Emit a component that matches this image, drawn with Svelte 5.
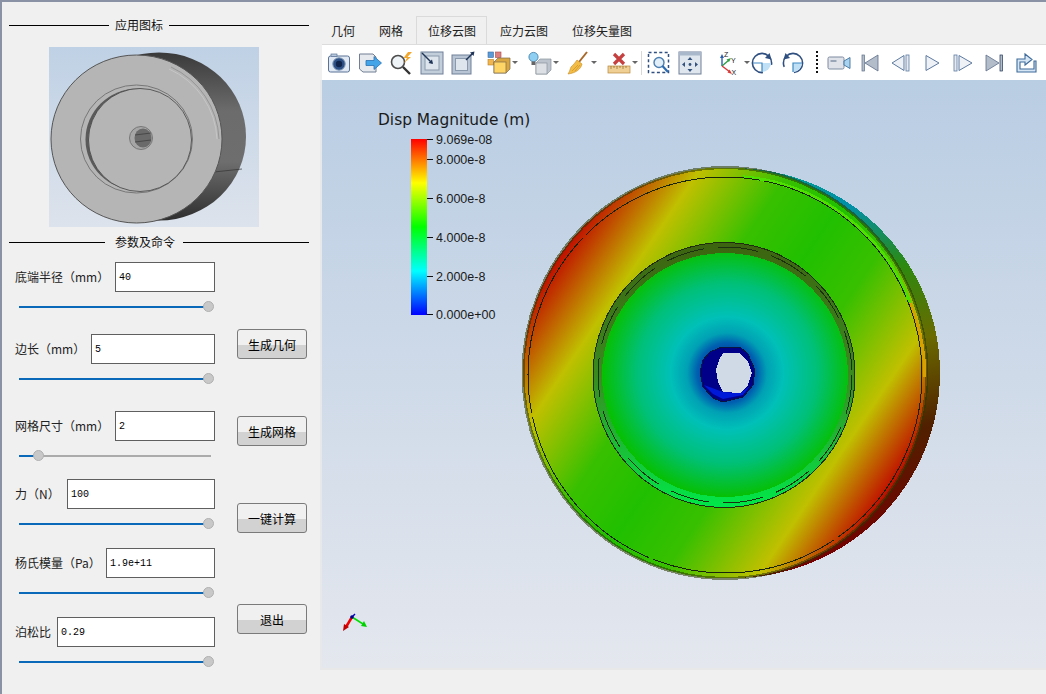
<script>
  const fields = [
    { label: '底端半径（mm）', value: '40', w: 100, pos: 98.4 },
    { label: '边长（mm）', value: '5', w: 76, pos: 98.4 },
    { label: '网格尺寸（mm）', value: '2', w: 100, pos: 10 },
    { label: '力（N）', value: '100', w: 52, pos: 98.4 },
    { label: '杨氏模量（Pa）', value: '1.9e+11', w: 91, pos: 98.4 },
    { label: '泊松比', value: '0.29', w: 42, pos: 98.4 }
  ];
  const tabs = ['几何', '网格', '位移云图', '应力云图', '位移矢量图'];
  const ticks = [
    { y: 139, t: '9.069e-08' },
    { y: 159, t: '8.000e-8' },
    { y: 198, t: '6.000e-8' },
    { y: 237, t: '4.000e-8' },
    { y: 276, t: '2.000e-8' },
    { y: 314, t: '0.000e+00' }
  ];
</script>

<div class="window">
  <aside class="side">
    <div class="title"><i class="ln first"></i><span>应用图标</span><i class="ln"></i></div>
    <svg class="thumb" width="210" height="180" viewBox="0 0 210 180">
      <defs>
        <linearGradient id="tbg" x1="0" y1="0" x2="0" y2="1">
          <stop offset="0" stop-color="#bfd1e5" /><stop offset="1" stop-color="#dde3ec" />
        </linearGradient>
        <linearGradient id="tbody" x1="0" y1="0" x2="0" y2="1">
          <stop offset="0" stop-color="#3a3a3a" /><stop offset=".35" stop-color="#6c6c6c" />
          <stop offset=".65" stop-color="#6e6e6e" /><stop offset="1" stop-color="#2e2e2e" />
        </linearGradient>
      </defs>
      <rect width="210" height="180" fill="url(#tbg)" />
      <ellipse cx="110" cy="89.5" rx="87" ry="84" fill="url(#tbody)" />
      <path d="M165 125 L193 122" stroke="#333" stroke-width=".7" />
      <ellipse cx="87.5" cy="92" rx="85.5" ry="84" fill="#b5b5b5" stroke="#555" stroke-width="1" />
      <path d="M120 22 A81 81 0 0 1 168 92" fill="none" stroke="#c6c6c6" stroke-width="1" />
      <path d="M122 20 A83 83 0 0 1 170 92" fill="none" stroke="#888" stroke-width=".7" />
      <ellipse cx="87.5" cy="92" rx="56" ry="54" fill="#b5b5b5" stroke="#777" stroke-width="1" />
      <ellipse cx="88.5" cy="92.5" rx="52" ry="51" fill="#5a5a5a" />
      <ellipse cx="91" cy="93" rx="51.5" ry="51.5" fill="#b5b5b5" stroke="#444" stroke-width=".8" />
      <circle cx="92" cy="91" r="11.5" fill="#a6a6a6" stroke="#777" />
      <ellipse cx="94" cy="91" rx="8.5" ry="9.5" fill="#6a6a6a" />
      <path d="M86 88 L102 86 M86 95 L102 93" stroke="#3a3a3a" stroke-width=".7" />
    </svg>
    <div class="title second"><i class="ln first two"></i><span>参数及命令</span><i class="ln"></i></div>

    <div class="controls">
      <div class="form">
        {#each fields as f}
          <div class="group">
            <div class="field">
              <label for={f.label} style:width="{f.w}px">{f.label}</label>
              <input id={f.label} value={f.value} />
            </div>
            <div class="slider">
              <div class="fill" style:width="{f.pos}%"></div>
              <div class="handle" style:left="{f.pos}%"></div>
            </div>
          </div>
        {/each}
      </div>
      <div class="buttons">
        <button class="b1">生成几何</button>
        <button class="b2">生成网格</button>
        <button class="b3">一键计算</button>
        <button class="b4">退出</button>
      </div>
    </div>
  </aside>

  <main class="main">
    <nav class="tabs">
      {#each tabs as t, i}
        <div class="tab" class:active={i === 2}>{t}</div>
      {/each}
    </nav>

    <div class="toolbar">
      <!-- camera -->
      <svg class="ic" viewBox="0 0 24 24"><rect x="1.5" y="5" width="21" height="16" rx="2" fill="#dfe8f3" stroke="#5a7396" /><rect x="4" y="3" width="6" height="2.5" fill="#b8c8dc" stroke="#5a7396" stroke-width=".7" /><circle cx="12" cy="13" r="6.2" fill="#2c4f86" stroke="#7f97b6" /><circle cx="12" cy="13" r="3.2" fill="#10234a" /></svg>
      <!-- export document -->
      <svg class="ic" viewBox="0 0 24 24"><path d="M1.5 3 H15 L18 6 V21 H5 L1.5 18 Z" fill="#e6e9ee" stroke="#717f94" /><path d="M8 9.5 H16 V5.5 L23.5 12 L16 18.5 V14.5 H8 Z" fill="#43a5e8" stroke="#2a6fb0" stroke-width=".8" /></svg>
      <!-- magnifier with bolt -->
      <svg class="ic" viewBox="0 0 24 24"><circle cx="9" cy="11" r="6.5" fill="#eef3f8" stroke="#4c4c4c" stroke-width="1.6" /><path d="M14 16 L21 23" stroke="#333" stroke-width="2.4" /><path d="M19 1 L14.5 7 H18 L15 12 L22 6 H18.5 L23 1 Z" fill="#f2a82f" /></svg>
      <!-- box arrow in -->
      <svg class="ic" viewBox="0 0 24 24"><rect x="1" y="1" width="22" height="22" fill="#c3cedb" stroke="#6f8097" /><rect x="5" y="5" width="14" height="14" fill="#dfe5ec" stroke="#8a99ac" /><path d="M2 2 L12 12" stroke="#1f3558" stroke-width="1.4" /><path d="M13 13 L8.5 12 L12 8.5 Z" fill="#1f3558" /></svg>
      <!-- box arrow out -->
      <svg class="ic" viewBox="0 0 24 24"><rect x="1" y="4" width="19" height="19" fill="#b8c4d3" stroke="#6f8097" /><rect x="4.5" y="7.5" width="12" height="12" fill="#dfe5ec" stroke="#8a99ac" /><path d="M15 9 L22 2" stroke="#1f3558" stroke-width="1.4" /><path d="M23.5 .5 L19 1.5 L22.5 5 Z" fill="#1f3558" /></svg>
      <!-- color squares + box -->
      <div class="drop d1">
        <svg class="ic" viewBox="0 0 24 24"><rect x="1" y="1" width="5.5" height="5.5" fill="#5b9ad8" stroke="#3b6ca0" stroke-width=".6" /><rect x="8.5" y="1" width="5.5" height="5.5" fill="#dd7f7f" stroke="#a04a4a" stroke-width=".6" /><rect x="1" y="8.5" width="5.5" height="5.5" fill="#f1b650" stroke="#b77f20" stroke-width=".6" /><path d="M7 11 L11 7 H23 V18 L19 22 H7 Z" fill="#d9a640" stroke="#7d6c4d" stroke-width=".7" /><rect x="7" y="11" width="12" height="11" fill="#ffd566" stroke="#7d6c4d" stroke-width=".7" /></svg>
        <i class="caret"></i>
      </div>
      <!-- bulb + box -->
      <div class="drop d2">
        <svg class="ic" viewBox="0 0 24 24"><circle cx="5.5" cy="6" r="4.6" fill="#8fd0f2" stroke="#3a79a8" stroke-width=".8" /><rect x="3.5" y="10.5" width="4" height="3.5" fill="#666" /><path d="M8 12 L12 8 H23 V19 L19 23 H8 Z" fill="#bcc3cc" stroke="#8a929c" stroke-width=".7" /><rect x="8" y="12" width="11" height="11" fill="#dde1e6" stroke="#8a929c" stroke-width=".7" /></svg>
        <i class="caret"></i>
      </div>
      <!-- broom -->
      <div class="drop d3">
        <svg class="ic" viewBox="0 0 24 24"><path d="M21 1 L13 11" stroke="#a8682a" stroke-width="2" /><path d="M11 9 L16 13 C15 18 10 22 2 23 C4 20 4 18 5 16 C7 14 9 12 11 9 Z" fill="#f3bc45" stroke="#c58a22" stroke-width=".6" /><path d="M6 20 L12 14 M9 20 L14 14" stroke="#c58a22" stroke-width=".6" /></svg>
        <i class="caret"></i>
      </div>
      <!-- ruler with x -->
      <div class="drop d4">
        <svg class="ic" viewBox="0 0 24 24"><rect x="1" y="15" width="22" height="7" fill="#f0cf95" stroke="#b8863a" stroke-width=".7" /><path d="M4 15v3M7 15v2M10 15v3M13 15v2M16 15v3M19 15v2" stroke="#8a6222" stroke-width=".7" /><path d="M7 3 L17 13 M17 3 L7 13" stroke="#c64040" stroke-width="3.2" /></svg>
        <i class="caret"></i>
      </div>
      <i class="sep"></i>
      <!-- dashed zoom -->
      <svg class="ic" viewBox="0 0 24 24"><rect x="1.5" y="1.5" width="20" height="20" fill="none" stroke="#2f4f80" stroke-width="1.5" stroke-dasharray="3 2.4" /><circle cx="12" cy="11.5" r="5" fill="#e2eef8" stroke="#4b7fb0" stroke-width="1.4" /><path d="M15.5 15 L21 21" stroke="#2d6cb0" stroke-width="2.2" /></svg>
      <!-- move window -->
      <svg class="ic" viewBox="0 0 24 24"><rect x="1" y="1" width="22" height="22" fill="#dfe6ee" stroke="#6f8097" /><rect x="1" y="1" width="22" height="3.5" fill="#a9b8ca" /><path d="M12 6 L14.5 9 H9.5 Z M12 21 L14.5 18 H9.5 Z M4 13.5 L7 11 V16 Z M20 13.5 L17 11 V16 Z" fill="#33527d" /><circle cx="12" cy="13.5" r="1.4" fill="#33527d" /></svg>
      <!-- axes -->
      <div class="drop d5">
        <svg class="ic" viewBox="0 0 24 24">
          <path d="M3 15 V6" stroke="#2b5fb0" stroke-width="1.4" /><path d="M3 3 L1 7 H5 Z" fill="#2b5fb0" />
          <path d="M3 15 L10 9" stroke="#2f9e44" stroke-width="1.4" /><path d="M12 7 L7.5 8.5 L10 11 Z" fill="#2f9e44" />
          <path d="M3 15 L11 21" stroke="#d63a3a" stroke-width="1.4" /><path d="M13 23 L8.5 21.5 L10.5 18.5 Z" fill="#d63a3a" />
          <text x="5" y="6" class="ax">Z</text><text x="12" y="12" class="ax">Y</text><text x="12.5" y="23.5" class="ax">X</text>
        </svg>
        <i class="caret"></i>
      </div>
      <!-- rotate cw -->
      <svg class="ic" viewBox="0 0 24 24"><circle cx="12" cy="12" r="9.6" fill="none" stroke="#2f4f80" stroke-width="1.6" stroke-dasharray="48 12" stroke-dashoffset="-14" /><path d="M12 12 H21 A9 9 0 0 1 12 21 Z" fill="#bfe0f5" /><path d="M3 12 H12 V21" fill="none" stroke="#3f8ac4" stroke-width="1.2" /><path d="M21.5 8.5 L15 7 L19.5 2 Z" fill="#2f4f80" /></svg>
      <!-- rotate ccw -->
      <svg class="ic" viewBox="0 0 24 24"><circle cx="12" cy="12" r="9.6" fill="none" stroke="#2f4f80" stroke-width="1.6" stroke-dasharray="48 12" stroke-dashoffset="34" /><path d="M12 12 H21 A9 9 0 0 1 12 21 Z" fill="#bfe0f5" /><path d="M21 12 H12 V21" fill="none" stroke="#3f8ac4" stroke-width="1.2" /><path d="M2.5 8.5 L9 7 L4.5 2 Z" fill="#2f4f80" /></svg>
      <i class="dots"></i>
      <!-- video camera -->
      <svg class="ic" viewBox="0 0 24 24"><rect x="1" y="6" width="16" height="12" rx="1.5" fill="#dfe3e9" stroke="#7c8ba0" /><rect x="3.5" y="9" width="6" height="2" fill="#98a5b6" /><path d="M17 10 L23 6.5 V17.5 L17 14 Z" fill="#a8d2ee" stroke="#3f6f9e" stroke-width=".9" /></svg>
      <!-- first -->
      <svg class="ic" viewBox="0 0 24 24"><rect x="4" y="4" width="2.5" height="16" fill="#b3bdca" stroke="#5d6f8a" stroke-width=".7" /><path d="M7 12 L20 4 V20 Z" fill="#b3bdca" stroke="#5d6f8a" stroke-width=".8" /></svg>
      <!-- prev -->
      <svg class="ic" viewBox="0 0 24 24"><path d="M3 12 L15 4.5 V19.5 Z" fill="#eef1f5" stroke="#5d7aa0" /><rect x="17" y="4" width="3" height="16" fill="#e6eaf0" stroke="#5d7aa0" stroke-width=".8" /></svg>
      <!-- play -->
      <svg class="ic" viewBox="0 0 24 24"><path d="M6 4.5 L19 12 L6 19.5 Z" fill="#eef1f5" stroke="#5d7aa0" /></svg>
      <!-- next -->
      <svg class="ic" viewBox="0 0 24 24"><rect x="3" y="4" width="3" height="16" fill="#e6eaf0" stroke="#5d7aa0" stroke-width=".8" /><path d="M8 4.5 L21 12 L8 19.5 Z" fill="#eef1f5" stroke="#5d7aa0" /></svg>
      <!-- last -->
      <svg class="ic" viewBox="0 0 24 24"><path d="M4 4 L17 12 L4 20 Z" fill="#b3bdca" stroke="#5d6f8a" stroke-width=".8" /><rect x="18" y="4" width="2.5" height="16" fill="#b3bdca" stroke="#1f3558" stroke-width=".7" /></svg>
      <!-- loop -->
      <svg class="ic" viewBox="0 0 24 24"><path d="M4 8 H12 V3 L19 8.5 L12 14 V11 H7 V18 H21 V10 H23 V21 H4 Z" fill="#d6e6f4" stroke="#3f6a9a" stroke-width="1.1" /></svg>
    </div>

    <div class="view">
      <svg class="scene" width="724" height="588" viewBox="322 80 724 588">
        <defs>
          <linearGradient id="scale" x1="0" y1="0" x2="0" y2="1">
            <stop offset="0" stop-color="#ff0000" /><stop offset=".25" stop-color="#ffff00" />
            <stop offset=".5" stop-color="#00ff00" /><stop offset=".75" stop-color="#00ffff" />
            <stop offset="1" stop-color="#0000ff" />
          </linearGradient>
          <linearGradient id="face" gradientUnits="userSpaceOnUse" x1="547" y1="255" x2="903" y2="495">
            <stop offset=".02" stop-color="#c00800" /><stop offset=".184" stop-color="#c0c000" />
            <stop offset=".36" stop-color="#38c000" /><stop offset=".5" stop-color="#20c000" />
            <stop offset=".64" stop-color="#38c000" /><stop offset=".826" stop-color="#c0c000" />
            <stop offset=".97" stop-color="#c00800" />
          </linearGradient>
          <linearGradient id="body" gradientUnits="userSpaceOnUse" x1="800" y1="170" x2="890" y2="545">
            <stop offset="0" stop-color="#009a90" /><stop offset=".12" stop-color="#0090a8" />
            <stop offset=".3" stop-color="#2c8a10" /><stop offset=".5" stop-color="#6a6a00" />
            <stop offset=".72" stop-color="#502000" /><stop offset="1" stop-color="#760000" />
          </linearGradient>
          <radialGradient id="floor" gradientUnits="userSpaceOnUse" cx="727" cy="373" r="125">
            <stop offset="0" stop-color="#000090" /><stop offset=".24" stop-color="#0060b0" />
            <stop offset=".32" stop-color="#00a0b4" /><stop offset=".45" stop-color="#00c0b8" />
            <stop offset=".72" stop-color="#00c078" /><stop offset="1" stop-color="#06c000" />
          </radialGradient>
          <linearGradient id="recess" x1="0" y1="0" x2="0" y2="1">
            <stop offset="0" stop-color="#3d6410" /><stop offset=".5" stop-color="#3a8a20" />
            <stop offset="1" stop-color="#00e84a" />
          </linearGradient>
        </defs>

        <ellipse class="edge" cx="733" cy="373" rx="207" ry="205" fill="url(#body)" />
        <ellipse class="edge" cx="725" cy="373" rx="202" ry="205.5" fill="url(#face)" stroke="#2a3a00" stroke-opacity=".55" stroke-width="3" />
        <path class="edge" d="M743 177 A197 198 0 0 1 910 303" fill="none" stroke="#4ee000" stroke-width="3.5" />
        <path class="edge" d="M910 303 A197 198 0 0 1 925 377" fill="none" stroke="#d8a000" stroke-width="3" />
        <ellipse class="edge" cx="725" cy="375" rx="197" ry="198" fill="none" stroke="#18240a" stroke-width="1" stroke-dasharray="190 4" />
        <ellipse class="edge" cx="724" cy="375" rx="131" ry="132.5" fill="url(#recess)" stroke="#202c10" stroke-width="1" />
        <ellipse class="edge" cx="725" cy="375" rx="127" ry="128" fill="none" stroke="#1a3010" stroke-width="1" stroke-dasharray="40 14" />
        <ellipse class="edge" cx="725" cy="375" rx="123" ry="122" fill="url(#floor)" />
        <polygon class="edge" points="710,352 722,347 740,347 748,354 755,370 753,385 743,397 723,402 713,398 703,387 700,372 703,360" fill="#000088" stroke="#0a1640" stroke-width="1" />
        <path d="M704 385 L713 394 L723 399 L743 395 L750 386 L740 393 L723 392 Z" fill="#0018d8" />
        <polygon class="edge" points="723,353 740,353 748,362 752,373 748,385 740,393 723,392 718,382 716,370 719,360" fill="#d0d9e6" />

        <text x="378" y="125" class="sb-title">Disp Magnitude (m)</text>
        <rect x="411" y="139" width="16" height="176" fill="url(#scale)" />
        {#each ticks as k}
          <path d="M427 {k.y + 0.5} H433" stroke="#111" stroke-width="1" />
          <text x="436" y={k.y + 4.5} class="sb-label">{k.t}</text>
        {/each}

        <path d="M352 617 L346 627" stroke="#f00000" stroke-width="2.5" />
        <path d="M343 631 L344 624 L349 627 Z" fill="#c00000" />
        <path d="M352 617 L363 624" stroke="#00e000" stroke-width="1.5" />
        <path d="M367 627 L361 626 L364 621 Z" fill="#00d000" />
        <path d="M352 617 L355 614" stroke="#0000d0" stroke-width="1.5" />
        <circle cx="352" cy="617" r="1.8" fill="#000090" />
      </svg>
    </div>
  </main>
</div>

<style>
  :global(body) {
    margin: 0;
    background: #f0f0f0;
  }
  .window {
    display: flex;
    width: 1046px;
    height: 694px;
    box-sizing: border-box;
    overflow: hidden;
    background: #f0f0f0;
    border-top: 2px solid #8a93a6;
    border-left: 2px solid #8a93a6;
    font-family: "Noto Sans CJK SC", "Liberation Sans", sans-serif;
    font-size: 12px;
    color: #111;
  }
  .side {
    width: 318px;
    flex: none;
    box-sizing: border-box;
    padding: 15px 0 0 7px;
  }
  .title {
    display: flex;
    align-items: center;
    gap: 6px;
    width: 300px;
    height: 16px;
    line-height: 16px;
  }
  .title.second {
    margin-top: 7px;
    gap: 8px;
  }
  .title .ln {
    flex: 1;
    height: 1px;
    background: #000;
  }
  .title .ln.first {
    flex: none;
    width: 100px;
  }
  .title .ln.first.two {
    width: 96px;
    margin-right: 2px;
  }
  .thumb {
    display: block;
    margin: 14px 0 0 40px;
  }
  .controls {
    display: flex;
    margin-top: 12px;
  }
  .form {
    width: 200px;
    flex: none;
    margin-left: 6px;
    display: grid;
    grid-template-columns: 200px;
    grid-template-rows: 72px 77px 68px 69px 69px 60px;
  }
  .field {
    display: flex;
    align-items: center;
    height: 30px;
  }
  .field label {
    flex: none;
    white-space: nowrap;
    color: #222;
    margin-top: -2px;
  }
  .field input {
    flex: 1;
    width: 0;
    min-width: 0;
    height: 30px;
    box-sizing: border-box;
    border: 1px solid #5f5f5f;
    background: #fff;
    padding: 0 0 0 3px;
    font-family: "Liberation Mono", monospace;
    font-size: 10px;
    color: #000;
    outline: none;
    border-radius: 0;
  }
  .slider {
    position: relative;
    height: 2px;
    margin: 14px 0 0 4px;
    width: 192px;
    background: #ababab;
  }
  .fill {
    height: 100%;
    background: #0a69b9;
  }
  .handle {
    position: absolute;
    top: -5px;
    width: 11px;
    height: 11px;
    margin-left: -5px;
    box-sizing: border-box;
    border-radius: 50%;
    background: #c8c8c8;
    border: 1px solid #b0b0b0;
  }
  .buttons {
    display: flex;
    flex-direction: column;
    margin-left: 22px;
    width: 70px;
    gap: 57px;
    padding-top: 67px;
  }
  .buttons .b4 {
    margin-top: 14px;
  }
  button {
    width: 70px;
    height: 30px;
    padding: 0;
    flex: none;
    border: 1px solid #7a7a7a;
    border-radius: 3px;
    background: linear-gradient(#f0f0f0 0, #f0f0f0 53%, #d2d2d2 53%, #d2d2d2 100%);
    font: inherit;
    color: #000;
  }
  .main {
    flex: 1;
    min-width: 0;
    margin-left: 2px;
    display: flex;
    flex-direction: column;
    height: 668px;
  }
  .tabs {
    display: flex;
    height: 28px;
    margin: 14px 0 0 -3px;
    flex: none;
  }
  .tab {
    padding: 0 11px;
    line-height: 28px;
    height: 28px;
    color: #222;
    box-sizing: border-box;
    border: 1px solid transparent;
    border-bottom: 0;
  }
  .tab.active {
    margin-left: 1px;
    padding-right: 10px;
    border-color: #dadada;
    background: #f0f0f0;
  }
  .tab.active + .tab {
    margin-left: 1px;
  }
  .toolbar {
    flex: none;
    height: 36px;
    box-sizing: border-box;
    background: #fff;
    border-top: 1px solid #dcdcdc;
    display: flex;
    align-items: center;
    padding: 0 0 0 1px;
  }
  .ic {
    width: 24px;
    height: 24px;
    flex: none;
    margin: 0 3.5px;
    display: block;
  }
  .drop {
    display: flex;
    align-items: center;
    flex: none;
  }
  .drop .ic {
    margin-right: 1px;
  }
  .d1 { width: 41px; margin-left: 5px; }
  .d2 { width: 38.5px; }
  .d3 { width: 40.5px; }
  .d4 { width: 36px; }
  .d5 { width: 31.5px; margin-left: 9.5px; }
  .caret {
    flex: none;
    width: 0;
    height: 0;
    border-left: 3px solid transparent;
    border-right: 3px solid transparent;
    border-top: 3px solid #666;
  }
  .sep {
    width: 1px;
    height: 24px;
    background: #d8d8d8;
    margin: 0 1.5px 0 2px;
    flex: none;
  }
  .dots {
    width: 2px;
    height: 24px;
    flex: none;
    margin: 0 5.5px 0 7px;
    background: repeating-linear-gradient(#111 0 2px, transparent 2px 4px);
  }
  .ax {
    font-family: "Liberation Sans", sans-serif;
    font-size: 7px;
    fill: #222;
  }
  .view {
    position: relative;
    flex: 1;
    min-height: 0;
    background: linear-gradient(#b9cde3, #e4e7ee);
    border-bottom: 2px solid #e8e8e8;
    box-shadow: -2px 0 0 #e6e8ea;
    overflow: hidden;
  }
  .scene {
    position: absolute;
    left: 0;
    top: 0;
    display: block;
  }
  .edge {
    shape-rendering: crispEdges;
  }
  .sb-title {
    font-family: "DejaVu Sans", sans-serif;
    font-size: 15.4px;
    fill: #1a1a1a;
  }
  .sb-label {
    font-family: "Liberation Sans", sans-serif;
    font-size: 12.5px;
    fill: #1a1a1a;
  }
</style>
